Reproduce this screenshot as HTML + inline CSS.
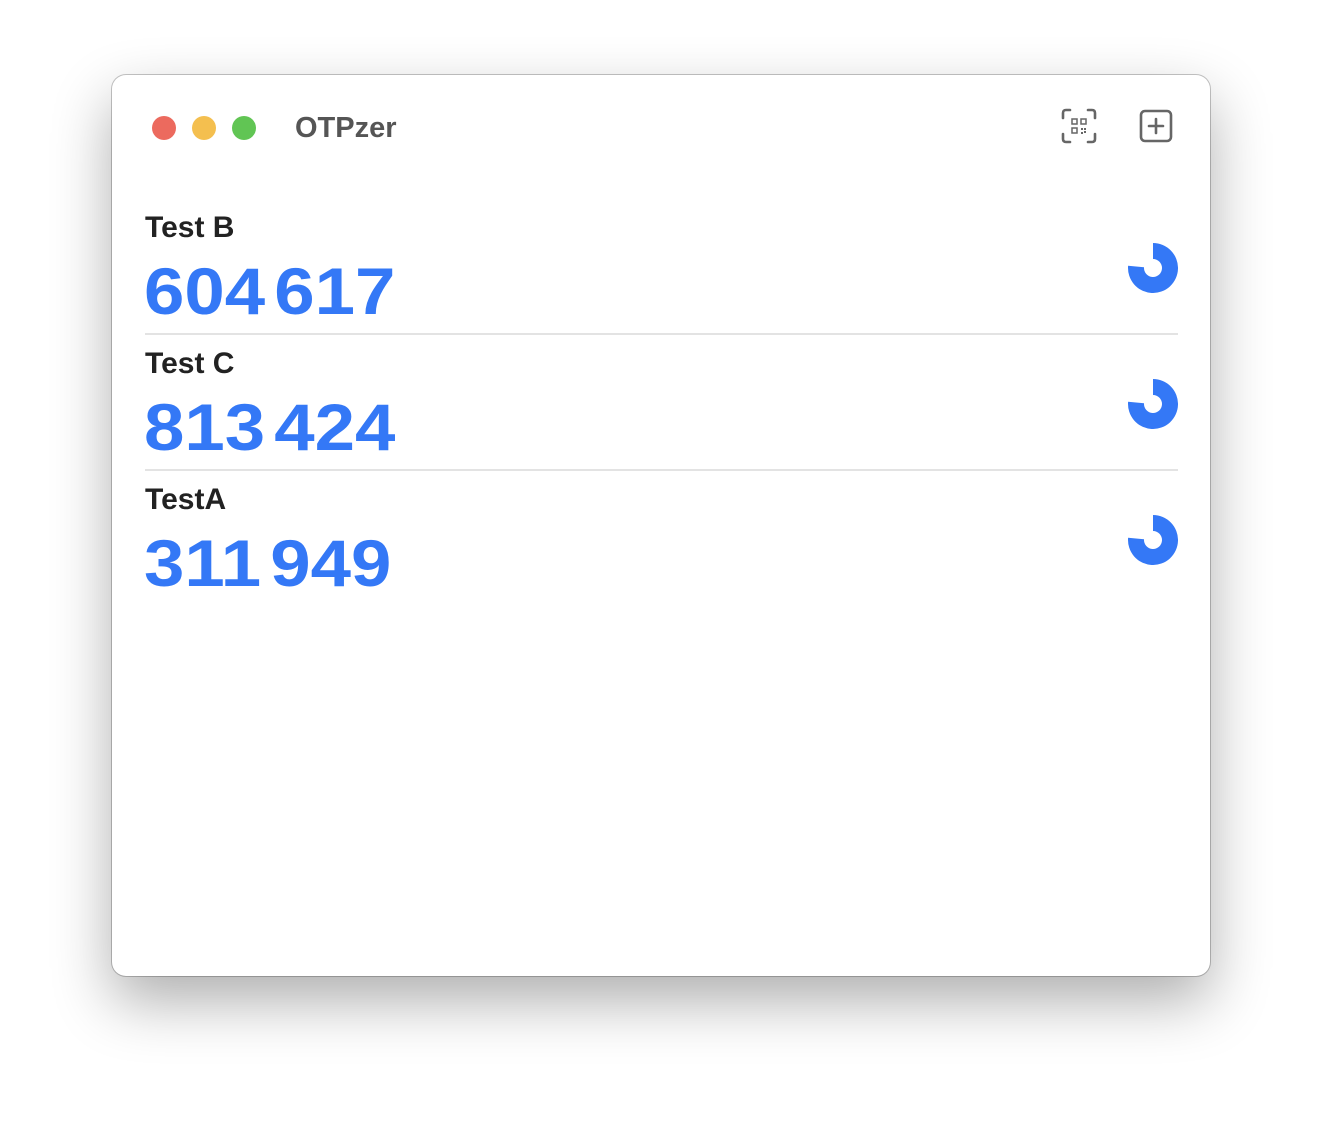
<!DOCTYPE html>
<html><head><style>
body{margin:0;width:1322px;height:1124px;background:#fff;position:relative;font-family:"Liberation Sans",sans-serif;overflow:hidden}
.win{position:absolute;left:112px;top:75px;width:1098px;height:901px;border-radius:14px;background:#fff;box-shadow:0 0 0 1px rgba(0,0,0,.22),0 25px 60px rgba(0,0,0,.32);}
.dot{position:absolute;top:116px;width:24px;height:24px;border-radius:50%}
.t{position:absolute;left:295px;top:112px;font-size:29px;font-weight:bold;color:#555}
.name{position:absolute;left:145px;font-size:30px;font-weight:bold;color:#222}
.code{position:absolute;left:144px;font-size:66px;font-weight:bold;color:#3478f6;letter-spacing:0;word-spacing:-10px;transform:scaleX(1.1);transform-origin:0 0;white-space:nowrap}
.hr{position:absolute;left:145px;width:1033px;height:2px;background:#e3e3e3}
svg{position:absolute}
</style></head><body>
<div class="win"></div>
<div class="dot" style="left:152px;background:#ec6a5e"></div>
<div class="dot" style="left:192px;background:#f4bf4f"></div>
<div class="dot" style="left:232px;background:#61c554"></div>
<div class="t">OTPzer</div>
<svg style="left:1060px;top:108px" width="38" height="36" viewBox="0 0 38 36" fill="none" stroke="#666" stroke-width="2.6" stroke-linecap="round">
<path d="M3 10V5Q3 2 6 2H10M28 2H32Q35 2 35 5V10M35 26V31Q35 34 32 34H28M10 34H6Q3 34 3 31V26"/>
<g stroke-width="1.5"><rect x="12" y="11" width="5" height="5"/><rect x="21" y="11" width="5" height="5"/><rect x="12" y="20" width="5" height="5"/></g>
<g fill="#666" stroke="none"><rect x="21" y="20" width="2" height="2"/><rect x="24" y="23" width="2" height="2"/><rect x="21" y="24" width="2" height="2"/><rect x="24" y="20" width="2" height="2"/></g>
</svg>
<svg style="left:1139px;top:109px" width="34" height="34" viewBox="0 0 34 34" fill="none" stroke="#666" stroke-width="2.6" stroke-linecap="round">
<rect x="2" y="2" width="30" height="30" rx="4"/><path d="M17 10V24M10 17H24"/>
</svg>

<div class="name" style="top:211px">Test B</div>
<div class="code" style="top:253px">604 617</div>
<div class="hr" style="top:333px"></div>
<div class="name" style="top:347px">Test C</div>
<div class="code" style="top:389px">813 424</div>
<div class="hr" style="top:469px"></div>
<div class="name" style="top:483px">TestA</div>
<div class="code" style="top:525px">311 949</div>

<svg style="left:1128px;top:243px" width="50" height="50" viewBox="-25 -25 50 50"><path fill="#3478f6" d="M0 -25A25 25 0 1 1 -24.9 -2.2L-8.96 -0.8A9 9 0 1 0 0 -9Z"/></svg>
<svg style="left:1128px;top:379px" width="50" height="50" viewBox="-25 -25 50 50"><path fill="#3478f6" d="M0 -25A25 25 0 1 1 -24.9 -2.2L-8.96 -0.8A9 9 0 1 0 0 -9Z"/></svg>
<svg style="left:1128px;top:515px" width="50" height="50" viewBox="-25 -25 50 50"><path fill="#3478f6" d="M0 -25A25 25 0 1 1 -24.9 -2.2L-8.96 -0.8A9 9 0 1 0 0 -9Z"/></svg>
</body></html>
